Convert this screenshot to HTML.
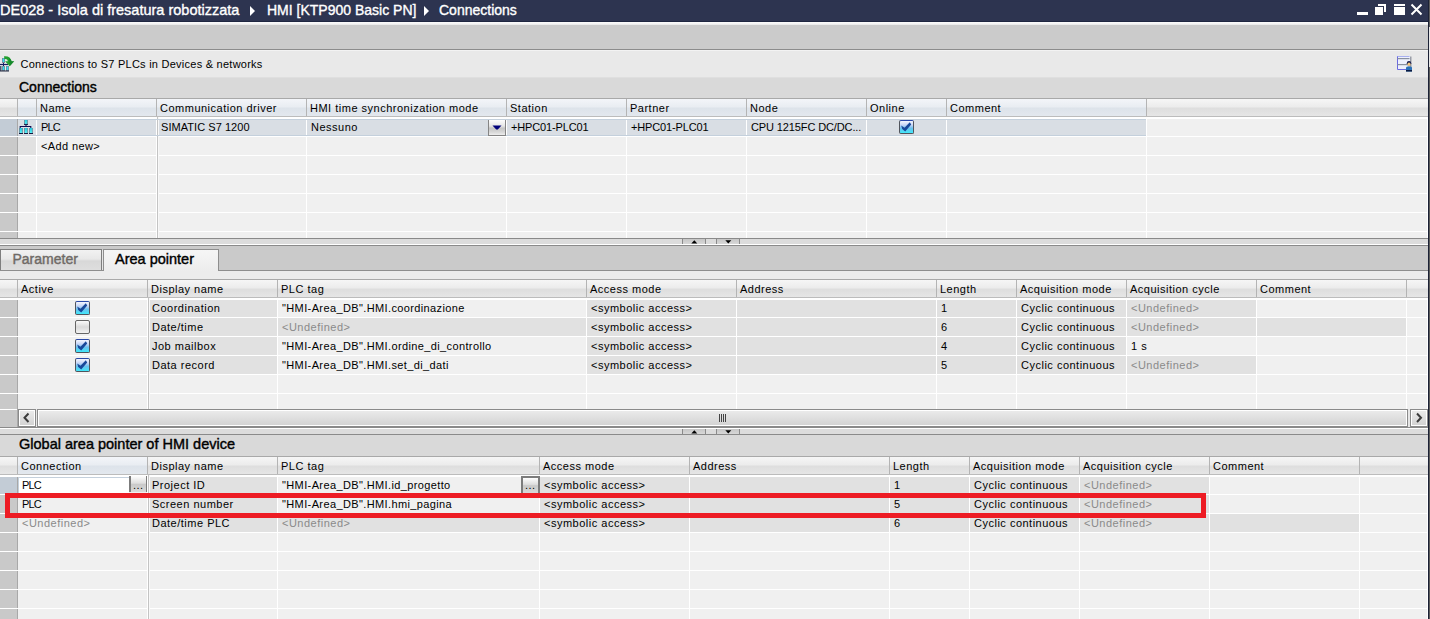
<!DOCTYPE html><html><head><meta charset="utf-8"><style>
html,body{margin:0;padding:0;}
body{width:1430px;height:619px;overflow:hidden;position:relative;background:#f0f0f0;font-family:"Liberation Sans",sans-serif;}
div{position:absolute;box-sizing:content-box;}
.t{white-space:nowrap;line-height:1;}
svg{position:absolute;}
</style></head><body>
<div style="left:0px;top:0px;width:1428px;height:21px;background:#2d3450"></div>
<div style="left:0px;top:21px;width:1428px;height:1px;background:#1e2640"></div>
<div class="t" style="left:0px;top:2.88px;font-size:14.5px;color:#ffffff;font-weight:normal;-webkit-text-stroke:0.35px #fff;">DE028 - Isola di fresatura robotizzata</div>
<svg style="left:250px;top:6px" width="6" height="10"><path d="M0 0 L5 5 L0 10 Z" fill="#fff"/></svg>
<div class="t" style="left:267px;top:3.33px;font-size:14px;color:#ffffff;font-weight:normal;-webkit-text-stroke:0.35px #fff;">HMI [KTP900 Basic PN]</div>
<svg style="left:424px;top:6px" width="6" height="10"><path d="M0 0 L5 5 L0 10 Z" fill="#fff"/></svg>
<div class="t" style="left:439px;top:3.33px;font-size:14px;color:#ffffff;font-weight:normal;-webkit-text-stroke:0.35px #fff;">Connections</div>
<div style="left:1357px;top:12px;width:11px;height:3px;background:#fff"></div>
<div style="left:1375px;top:7px;width:8px;height:8px;background:#fff"></div>
<div style="left:1378px;top:4px;width:8px;height:2px;background:#fff"></div>
<div style="left:1384px;top:4px;width:2px;height:8px;background:#fff"></div>
<div style="left:1394px;top:4px;width:11px;height:2px;background:#fff"></div>
<div style="left:1394px;top:7px;width:11px;height:8px;background:#fff"></div>
<svg style="left:1410px;top:3px" width="14" height="14"><path d="M1.5 1.5 L11.5 11.5 M11.5 1.5 L1.5 11.5" stroke="#fff" stroke-width="2"/></svg>
<div style="left:1428px;top:0px;width:1px;height:619px;background:#1c2236"></div>
<div style="left:1429px;top:0px;width:1px;height:619px;background:#5c5c5c"></div>
<div style="left:1429px;top:27px;width:1px;height:40px;background:#e8e8e8"></div>
<div style="left:0px;top:22px;width:1428px;height:3px;background:linear-gradient(#fbfbfb,#f2f2f2 66%,#e4e4e4)"></div>
<div style="left:0px;top:25px;width:1428px;height:24px;background:#cbcbcb"></div>
<div style="left:0px;top:49px;width:1428px;height:1px;background:#8c8c8c"></div>
<div style="left:0px;top:50px;width:1428px;height:27px;background:#e9e9e9"></div>
<div style="left:0px;top:50px;width:1428px;height:1px;background:#f3f3f3"></div>
<svg style="left:0px;top:50px" width="16" height="24" viewBox="0 0 16 24">
<rect x="2" y="8" width="3" height="5" fill="#7a8090"/><rect x="2.7" y="8.5" width="1.6" height="3.6" fill="#30e0f0"/>
<path d="M0 14.5 H8" stroke="#151a60" stroke-width="1.2"/><path d="M3.5 13 V16" stroke="#151a60" stroke-width="1"/>
<rect x="0" y="16" width="1.5" height="5" fill="#505870"/>
<rect x="2" y="16" width="3" height="5" fill="#7a8090"/><rect x="2.7" y="16.5" width="1.6" height="3.6" fill="#30e0f0"/>
<rect x="6" y="16" width="3" height="5" fill="#7a8090"/><rect x="6.7" y="16.5" width="1.6" height="3.6" fill="#30e0f0"/>
<path d="M0 21 H9" stroke="#202840" stroke-width="1"/>
<path d="M4 6.2 Q10.5 5.6 11.6 11.3 L14.2 11.3 L9.7 16.2 L5 11.3 L7.9 11.3 Q7.6 8.6 4.4 9 Z" fill="#22a030"/><path d="M9 8 Q11 9 11.6 11.3 L14.2 11.3 L9.7 16.2 Z" fill="#0f7a28" opacity="0.6"/>
</svg>
<div class="t" style="left:20.5px;top:59.04px;font-size:11px;color:#000;font-weight:normal;letter-spacing:0.25px;">Connections to S7 PLCs in Devices &amp; networks</div>
<svg style="left:1396px;top:55px" width="18" height="18" viewBox="0 0 18 18">
<rect x="13.5" y="1.5" width="2" height="13" fill="#9a9ea8"/>
<rect x="1" y="1" width="13" height="14" fill="#eef0fc"/>
<path d="M1.5 1 V14.5 H13" stroke="#6a6ae0" stroke-width="1" fill="none"/>
<path d="M1.5 1.5 H13.5" stroke="#a8b0f0" stroke-width="1"/>
<rect x="1.5" y="3" width="12" height="1.2" fill="#8890a0"/>
<rect x="1.5" y="9" width="12" height="1.2" fill="#8890a0"/>
<circle cx="13" cy="8.3" r="2.2" fill="#12184a"/>
<ellipse cx="13" cy="9.2" rx="1.6" ry="1.8" fill="#f4c880"/>
<path d="M10 16.5 V13 Q10 11.3 13 11.3 Q16 11.3 16 13 V16.5 Z" fill="#2a70b8"/>
<rect x="10" y="15" width="6" height="1.5" fill="#0a1a40"/>
</svg>
<div style="left:0px;top:77px;width:1428px;height:21px;background:#d9d9d9"></div>
<div style="left:0px;top:77px;width:1428px;height:1px;background:#dfdfdf"></div>
<div class="t" style="left:19px;top:79.83px;font-size:14px;color:#000;font-weight:normal;-webkit-text-stroke:0.4px #000;">Connections</div>
<div style="left:0px;top:98px;width:1428px;height:140px;background:#f0f0f0"></div>
<div style="left:0;top:98px;width:1428px;height:1px;background:#a9a9a9"></div>
<div style="left:0px;top:99px;width:17px;height:17px;background:linear-gradient(#f6f6f6 0%,#ececec 45%,#dedede 55%,#e6e6e6 100%)"></div>
<div style="left:18px;top:99px;width:18px;height:17px;background:linear-gradient(#f3f5f9 0%,#e9edf2 45%,#dde3ea 55%,#e3e8ee 100%)"></div>
<div style="left:37px;top:99px;width:119px;height:17px;background:linear-gradient(#f3f5f9 0%,#e9edf2 45%,#dde3ea 55%,#e3e8ee 100%)"></div>
<div style="left:157px;top:99px;width:149px;height:17px;background:linear-gradient(#f3f5f9 0%,#e9edf2 45%,#dde3ea 55%,#e3e8ee 100%)"></div>
<div style="left:307px;top:99px;width:199px;height:17px;background:linear-gradient(#f3f5f9 0%,#e9edf2 45%,#dde3ea 55%,#e3e8ee 100%)"></div>
<div style="left:507px;top:99px;width:119px;height:17px;background:linear-gradient(#f3f5f9 0%,#e9edf2 45%,#dde3ea 55%,#e3e8ee 100%)"></div>
<div style="left:627px;top:99px;width:119px;height:17px;background:linear-gradient(#f3f5f9 0%,#e9edf2 45%,#dde3ea 55%,#e3e8ee 100%)"></div>
<div style="left:747px;top:99px;width:119px;height:17px;background:linear-gradient(#f3f5f9 0%,#e9edf2 45%,#dde3ea 55%,#e3e8ee 100%)"></div>
<div style="left:867px;top:99px;width:79px;height:17px;background:linear-gradient(#f3f5f9 0%,#e9edf2 45%,#dde3ea 55%,#e3e8ee 100%)"></div>
<div style="left:947px;top:99px;width:199px;height:17px;background:linear-gradient(#f3f5f9 0%,#e9edf2 45%,#dde3ea 55%,#e3e8ee 100%)"></div>
<div style="left:1147px;top:99px;width:281px;height:17px;background:linear-gradient(#f6f6f6 0%,#ececec 45%,#dedede 55%,#e6e6e6 100%)"></div>
<div style="left:17px;top:99px;width:1px;height:17px;background:#b4b4b4"></div>
<div style="left:36px;top:99px;width:1px;height:17px;background:#b4b4b4"></div>
<div style="left:156px;top:99px;width:1px;height:17px;background:#b4b4b4"></div>
<div style="left:306px;top:99px;width:1px;height:17px;background:#b4b4b4"></div>
<div style="left:506px;top:99px;width:1px;height:17px;background:#b4b4b4"></div>
<div style="left:626px;top:99px;width:1px;height:17px;background:#b4b4b4"></div>
<div style="left:746px;top:99px;width:1px;height:17px;background:#b4b4b4"></div>
<div style="left:866px;top:99px;width:1px;height:17px;background:#b4b4b4"></div>
<div style="left:946px;top:99px;width:1px;height:17px;background:#b4b4b4"></div>
<div style="left:1146px;top:99px;width:1px;height:17px;background:#b4b4b4"></div>
<div style="left:0px;top:116px;width:1428px;height:1px;background:#bcbcbc"></div>
<div class="t" style="left:40px;top:103.04px;font-size:11px;color:#000;font-weight:normal;letter-spacing:0.5px;">Name</div>
<div class="t" style="left:160px;top:103.04px;font-size:11px;color:#000;font-weight:normal;letter-spacing:0.5px;">Communication driver</div>
<div class="t" style="left:310px;top:103.04px;font-size:11px;color:#000;font-weight:normal;letter-spacing:0.5px;">HMI time synchronization mode</div>
<div class="t" style="left:510px;top:103.04px;font-size:11px;color:#000;font-weight:normal;letter-spacing:0.5px;">Station</div>
<div class="t" style="left:630px;top:103.04px;font-size:11px;color:#000;font-weight:normal;letter-spacing:0.5px;">Partner</div>
<div class="t" style="left:750px;top:103.04px;font-size:11px;color:#000;font-weight:normal;letter-spacing:0.5px;">Node</div>
<div class="t" style="left:870px;top:103.04px;font-size:11px;color:#000;font-weight:normal;letter-spacing:0.5px;">Online</div>
<div class="t" style="left:950px;top:103.04px;font-size:11px;color:#000;font-weight:normal;letter-spacing:0.5px;">Comment</div>
<div style="left:0px;top:118px;width:17px;height:18px;background:#c3ccd6"></div>
<div style="left:18px;top:118px;width:18px;height:18px;background:#d9dee4"></div>
<div style="left:37px;top:118px;width:119px;height:18px;background:#d9dee4"></div>
<div style="left:157px;top:118px;width:149px;height:18px;background:#d9dee4"></div>
<div style="left:307px;top:118px;width:199px;height:18px;background:#d9dee4"></div>
<div style="left:507px;top:118px;width:119px;height:18px;background:#d9dee4"></div>
<div style="left:627px;top:118px;width:119px;height:18px;background:#d9dee4"></div>
<div style="left:747px;top:118px;width:119px;height:18px;background:#d9dee4"></div>
<div style="left:867px;top:118px;width:79px;height:18px;background:#d9dee4"></div>
<div style="left:947px;top:118px;width:199px;height:18px;background:#d9dee4"></div>
<div style="left:0px;top:137px;width:17px;height:18px;background:#c9c9c9"></div>
<div style="left:18px;top:137px;width:18px;height:18px;background:#e1e1e1"></div>
<div style="left:0px;top:156px;width:17px;height:18px;background:#c9c9c9"></div>
<div style="left:0px;top:175px;width:17px;height:18px;background:#c9c9c9"></div>
<div style="left:0px;top:194px;width:17px;height:18px;background:#c9c9c9"></div>
<div style="left:0px;top:213px;width:17px;height:18px;background:#c9c9c9"></div>
<div style="left:0px;top:232px;width:17px;height:6px;background:#c9c9c9"></div>
<div style="left:17px;top:117px;width:1px;height:121px;background:#a8a8a8"></div>
<div style="left:0px;top:118px;width:1428px;height:1px;background:#ffffff"></div>
<div style="left:0px;top:117px;width:1428px;height:1px;background:#ffffff"></div>
<div style="left:0px;top:136px;width:1428px;height:1px;background:#ffffff"></div>
<div style="left:0px;top:155px;width:1428px;height:1px;background:#ffffff"></div>
<div style="left:0px;top:174px;width:1428px;height:1px;background:#ffffff"></div>
<div style="left:0px;top:193px;width:1428px;height:1px;background:#ffffff"></div>
<div style="left:0px;top:212px;width:1428px;height:1px;background:#ffffff"></div>
<div style="left:0px;top:231px;width:1428px;height:1px;background:#ffffff"></div>
<div style="left:36px;top:117px;width:1px;height:121px;background:#ffffff"></div>
<div style="left:156px;top:117px;width:1px;height:121px;background:#ffffff"></div>
<div style="left:306px;top:117px;width:1px;height:121px;background:#ffffff"></div>
<div style="left:506px;top:117px;width:1px;height:121px;background:#ffffff"></div>
<div style="left:626px;top:117px;width:1px;height:121px;background:#ffffff"></div>
<div style="left:746px;top:117px;width:1px;height:121px;background:#ffffff"></div>
<div style="left:866px;top:117px;width:1px;height:121px;background:#ffffff"></div>
<div style="left:946px;top:117px;width:1px;height:121px;background:#ffffff"></div>
<div style="left:1146px;top:117px;width:1px;height:121px;background:#ffffff"></div>
<div style="left:1427px;top:117px;width:1px;height:121px;background:#ffffff"></div>
<div style="left:157px;top:117px;width:1px;height:121px;background:#c4c4c4"></div>
<div style="left:158px;top:117px;width:1px;height:121px;background:#f8f8f8"></div>
<div style="left:18px;top:119px;width:1128px;height:1px;background:#c4d0dc"></div>
<div style="left:18px;top:135px;width:1128px;height:1px;background:#c4d0dc"></div>
<div class="t" style="left:41px;top:122.04px;font-size:11px;color:#000;font-weight:normal;letter-spacing:-0.8px;">PLC</div>
<div class="t" style="left:161px;top:122.04px;font-size:11px;color:#000;font-weight:normal;letter-spacing:0.05px;">SIMATIC S7 1200</div>
<div class="t" style="left:311px;top:122.04px;font-size:11px;color:#000;font-weight:normal;letter-spacing:0.5px;">Nessuno</div>
<div class="t" style="left:511px;top:122.04px;font-size:11px;color:#000;font-weight:normal;letter-spacing:-0.15px;">+HPC01-PLC01</div>
<div class="t" style="left:631px;top:122.04px;font-size:11px;color:#000;font-weight:normal;letter-spacing:-0.15px;">+HPC01-PLC01</div>
<div class="t" style="left:751px;top:122.04px;font-size:11px;color:#000;font-weight:normal;letter-spacing:-0.12px;">CPU 1215FC DC/DC...</div>
<div class="t" style="left:41px;top:141.04px;font-size:11px;color:#000;font-weight:normal;letter-spacing:0.37px;">&lt;Add new&gt;</div>
<svg style="left:18px;top:119px" width="16" height="16" viewBox="0 0 16 16">
<defs><linearGradient id="cy" x1="0" y1="0" x2="0" y2="1"><stop offset="0" stop-color="#20c8e0"/><stop offset="1" stop-color="#60fcff"/></linearGradient></defs>
<rect x="6.2" y="1" width="3.5" height="4.6" fill="url(#cy)"/><path d="M6.5 1 V5.3 M9.4 1 V5.3" stroke="#707888" stroke-width="0.7"/><rect x="6" y="4.9" width="4" height="1" fill="#151a40"/>
<path d="M8 5.5 V7.6 M2.2 9.2 V7.5 H12.8 V9.2" stroke="#0c0c50" stroke-width="1.1" fill="none"/>
<rect x="1.2" y="9" width="3.5" height="5.6" fill="url(#cy)"/><path d="M1.5 9 V14.3 M4.4 9 V14.3" stroke="#707888" stroke-width="0.7"/><rect x="1" y="14" width="4" height="1" fill="#151a40"/>
<rect x="6.2" y="9" width="3.5" height="5.6" fill="url(#cy)"/><path d="M6.5 9 V14.3 M9.4 9 V14.3" stroke="#707888" stroke-width="0.7"/><rect x="6" y="14" width="4" height="1" fill="#151a40"/>
<rect x="11.2" y="9" width="3.5" height="5.6" fill="url(#cy)"/><path d="M11.5 9 V14.3 M14.4 9 V14.3" stroke="#707888" stroke-width="0.7"/><rect x="11" y="14" width="4" height="1" fill="#151a40"/>
</svg>
<div style="left:488px;top:120px;width:16px;height:15px;border-left:1px solid #858585;border-right:1px solid #858585;border-bottom:1px solid #858585;background:linear-gradient(#fdfdfd 0%,#e6e6e6 40%,#c4c4c4 55%,#dcdcdc 85%,#eeeeee 100%)"></div>
<svg style="left:492px;top:125px" width="10" height="6"><path d="M0.5 0.6 H9.5 L5.8 4.6 H4.2 Z" fill="#00007a"/></svg>
<div style="left:899px;top:120px;width:13px;height:12px;border:1px solid #50545c;border-top-color:#2a48a8;border-radius:2px;background:linear-gradient(#f4f6fe 0%,#c4d4f6 35%,#6cc0ee 60%,#40e8fa 100%)"></div>
<svg style="position:absolute;left:899px;top:120px" width="15" height="14" viewBox="0 0 15 14"><path d="M2.2 5.4 L5.5 7.8 L10.8 2.2 L12.2 4.6 L6.2 11.4 L3.2 9 Z" fill="#18489a"/></svg>
<div style="left:0px;top:238px;width:1428px;height:1px;background:#8a8a8a"></div>
<div style="left:0px;top:239px;width:1428px;height:5px;background:#dcdcdc"></div>
<div style="left:0px;top:244px;width:1428px;height:1px;background:#ffffff"></div>
<div style="left:0px;top:245px;width:1428px;height:1px;background:#8a8a8a"></div>
<div style="left:682px;top:239px;width:22px;height:5px;border-left:1px solid #8a8a8a;border-right:1px solid #8a8a8a;background:linear-gradient(#c6c6c6,#d8d8d8)"></div>
<svg style="left:691px;top:240px" width="7" height="4"><path d="M0.3 3.5 L3.3 0.3 L6.3 3.5 Z" fill="#000"/></svg>
<div style="left:716px;top:239px;width:22px;height:5px;border-left:1px solid #8a8a8a;border-right:1px solid #8a8a8a;background:linear-gradient(#c6c6c6,#d8d8d8)"></div>
<svg style="left:725px;top:240px" width="7" height="4"><path d="M0.3 0.3 L6.3 0.3 L3.3 3.5 Z" fill="#000"/></svg>
<div style="left:0px;top:246px;width:1428px;height:24px;background:#cacaca"></div>
<div style="left:0px;top:270px;width:1428px;height:1px;background:#8e8e8e"></div>
<div style="left:0px;top:249px;width:101px;height:20px;border-top:1px solid #7e7e7e;border-right:1px solid #7e7e7e;box-shadow:inset 1px 0 0 #7e7e7e;background:linear-gradient(#f2f2f2 0%,#e8e8e8 45%,#d8d8d8 55%,#dedede 100%)"></div>
<div style="left:102px;top:250px;width:1px;height:20px;background:#e6e6e6"></div>
<div class="t" style="left:12.5px;top:252.33px;font-size:14px;color:#6f6a66;font-weight:normal;-webkit-text-stroke:0.4px #6f6a66;">Parameter</div>
<div style="left:103px;top:249px;width:114px;height:22px;border-top:1px solid #8e8e8e;border-left:1px solid #8e8e8e;border-right:1px solid #8e8e8e;background:linear-gradient(#f6f6f6,#ececec)"></div>
<div class="t" style="left:115px;top:252.38px;font-size:14.5px;color:#000;font-weight:normal;-webkit-text-stroke:0.4px #000;">Area pointer</div>
<div style="left:0px;top:271px;width:1428px;height:8px;background:#ececec"></div>
<div style="left:0px;top:279px;width:1428px;height:130px;background:#f0f0f0"></div>
<div style="left:0;top:279px;width:1428px;height:1px;background:#a9a9a9"></div>
<div style="left:0px;top:280px;width:17px;height:17px;background:linear-gradient(#f6f6f6 0%,#ececec 45%,#dedede 55%,#e6e6e6 100%)"></div>
<div style="left:18px;top:280px;width:129px;height:17px;background:linear-gradient(#f6f6f6 0%,#ececec 45%,#dedede 55%,#e6e6e6 100%)"></div>
<div style="left:148px;top:280px;width:129px;height:17px;background:linear-gradient(#f6f6f6 0%,#ececec 45%,#dedede 55%,#e6e6e6 100%)"></div>
<div style="left:278px;top:280px;width:308px;height:17px;background:linear-gradient(#f6f6f6 0%,#ececec 45%,#dedede 55%,#e6e6e6 100%)"></div>
<div style="left:587px;top:280px;width:149px;height:17px;background:linear-gradient(#f6f6f6 0%,#ececec 45%,#dedede 55%,#e6e6e6 100%)"></div>
<div style="left:737px;top:280px;width:199px;height:17px;background:linear-gradient(#f6f6f6 0%,#ececec 45%,#dedede 55%,#e6e6e6 100%)"></div>
<div style="left:937px;top:280px;width:79px;height:17px;background:linear-gradient(#f6f6f6 0%,#ececec 45%,#dedede 55%,#e6e6e6 100%)"></div>
<div style="left:1017px;top:280px;width:109px;height:17px;background:linear-gradient(#f6f6f6 0%,#ececec 45%,#dedede 55%,#e6e6e6 100%)"></div>
<div style="left:1127px;top:280px;width:129px;height:17px;background:linear-gradient(#f6f6f6 0%,#ececec 45%,#dedede 55%,#e6e6e6 100%)"></div>
<div style="left:1257px;top:280px;width:149px;height:17px;background:linear-gradient(#f6f6f6 0%,#ececec 45%,#dedede 55%,#e6e6e6 100%)"></div>
<div style="left:1407px;top:280px;width:21px;height:17px;background:linear-gradient(#f6f6f6 0%,#ececec 45%,#dedede 55%,#e6e6e6 100%)"></div>
<div style="left:17px;top:280px;width:1px;height:17px;background:#b4b4b4"></div>
<div style="left:147px;top:280px;width:1px;height:17px;background:#b4b4b4"></div>
<div style="left:277px;top:280px;width:1px;height:17px;background:#b4b4b4"></div>
<div style="left:586px;top:280px;width:1px;height:17px;background:#b4b4b4"></div>
<div style="left:736px;top:280px;width:1px;height:17px;background:#b4b4b4"></div>
<div style="left:936px;top:280px;width:1px;height:17px;background:#b4b4b4"></div>
<div style="left:1016px;top:280px;width:1px;height:17px;background:#b4b4b4"></div>
<div style="left:1126px;top:280px;width:1px;height:17px;background:#b4b4b4"></div>
<div style="left:1256px;top:280px;width:1px;height:17px;background:#b4b4b4"></div>
<div style="left:1406px;top:280px;width:1px;height:17px;background:#b4b4b4"></div>
<div style="left:0px;top:297px;width:1428px;height:1px;background:#bcbcbc"></div>
<div class="t" style="left:21px;top:284.04px;font-size:11px;color:#000;font-weight:normal;letter-spacing:0.5px;">Active</div>
<div class="t" style="left:151px;top:284.04px;font-size:11px;color:#000;font-weight:normal;letter-spacing:0.5px;">Display name</div>
<div class="t" style="left:281px;top:284.04px;font-size:11px;color:#000;font-weight:normal;letter-spacing:0.5px;">PLC tag</div>
<div class="t" style="left:590px;top:284.04px;font-size:11px;color:#000;font-weight:normal;letter-spacing:0.5px;">Access mode</div>
<div class="t" style="left:740px;top:284.04px;font-size:11px;color:#000;font-weight:normal;letter-spacing:0.5px;">Address</div>
<div class="t" style="left:940px;top:284.04px;font-size:11px;color:#000;font-weight:normal;letter-spacing:0.5px;">Length</div>
<div class="t" style="left:1020px;top:284.04px;font-size:11px;color:#000;font-weight:normal;letter-spacing:0.5px;">Acquisition mode</div>
<div class="t" style="left:1130px;top:284.04px;font-size:11px;color:#000;font-weight:normal;letter-spacing:0.5px;">Acquisition cycle</div>
<div class="t" style="left:1260px;top:284.04px;font-size:11px;color:#000;font-weight:normal;letter-spacing:0.5px;">Comment</div>
<div style="left:0px;top:299px;width:17px;height:18px;background:#c9c9c9"></div>
<div style="left:148px;top:299px;width:129px;height:18px;background:#e1e1e1"></div>
<div style="left:587px;top:299px;width:149px;height:18px;background:#e1e1e1"></div>
<div style="left:737px;top:299px;width:199px;height:18px;background:#e1e1e1"></div>
<div style="left:937px;top:299px;width:79px;height:18px;background:#e1e1e1"></div>
<div style="left:1017px;top:299px;width:109px;height:18px;background:#e1e1e1"></div>
<div style="left:1127px;top:299px;width:129px;height:18px;background:#e1e1e1"></div>
<div style="left:0px;top:318px;width:17px;height:18px;background:#c9c9c9"></div>
<div style="left:148px;top:318px;width:129px;height:18px;background:#e1e1e1"></div>
<div style="left:278px;top:318px;width:308px;height:18px;background:#e1e1e1"></div>
<div style="left:587px;top:318px;width:149px;height:18px;background:#e1e1e1"></div>
<div style="left:737px;top:318px;width:199px;height:18px;background:#e1e1e1"></div>
<div style="left:937px;top:318px;width:79px;height:18px;background:#e1e1e1"></div>
<div style="left:1017px;top:318px;width:109px;height:18px;background:#e1e1e1"></div>
<div style="left:1127px;top:318px;width:129px;height:18px;background:#e1e1e1"></div>
<div style="left:1257px;top:318px;width:149px;height:18px;background:#e1e1e1"></div>
<div style="left:0px;top:337px;width:17px;height:18px;background:#c9c9c9"></div>
<div style="left:148px;top:337px;width:129px;height:18px;background:#e1e1e1"></div>
<div style="left:587px;top:337px;width:149px;height:18px;background:#e1e1e1"></div>
<div style="left:737px;top:337px;width:199px;height:18px;background:#e1e1e1"></div>
<div style="left:937px;top:337px;width:79px;height:18px;background:#e1e1e1"></div>
<div style="left:1017px;top:337px;width:109px;height:18px;background:#e1e1e1"></div>
<div style="left:0px;top:356px;width:17px;height:18px;background:#c9c9c9"></div>
<div style="left:148px;top:356px;width:129px;height:18px;background:#e1e1e1"></div>
<div style="left:587px;top:356px;width:149px;height:18px;background:#e1e1e1"></div>
<div style="left:737px;top:356px;width:199px;height:18px;background:#e1e1e1"></div>
<div style="left:937px;top:356px;width:79px;height:18px;background:#e1e1e1"></div>
<div style="left:1017px;top:356px;width:109px;height:18px;background:#e1e1e1"></div>
<div style="left:1127px;top:356px;width:129px;height:18px;background:#e1e1e1"></div>
<div style="left:0px;top:375px;width:17px;height:18px;background:#c9c9c9"></div>
<div style="left:0px;top:394px;width:17px;height:15px;background:#c9c9c9"></div>
<div style="left:17px;top:298px;width:1px;height:111px;background:#a8a8a8"></div>
<div style="left:0px;top:299px;width:1428px;height:1px;background:#ffffff"></div>
<div style="left:0px;top:298px;width:1428px;height:1px;background:#ffffff"></div>
<div style="left:0px;top:317px;width:1428px;height:1px;background:#ffffff"></div>
<div style="left:0px;top:336px;width:1428px;height:1px;background:#ffffff"></div>
<div style="left:0px;top:355px;width:1428px;height:1px;background:#ffffff"></div>
<div style="left:0px;top:374px;width:1428px;height:1px;background:#ffffff"></div>
<div style="left:0px;top:393px;width:1428px;height:1px;background:#ffffff"></div>
<div style="left:147px;top:298px;width:1px;height:111px;background:#ffffff"></div>
<div style="left:277px;top:298px;width:1px;height:111px;background:#ffffff"></div>
<div style="left:586px;top:298px;width:1px;height:111px;background:#ffffff"></div>
<div style="left:736px;top:298px;width:1px;height:111px;background:#ffffff"></div>
<div style="left:936px;top:298px;width:1px;height:111px;background:#ffffff"></div>
<div style="left:1016px;top:298px;width:1px;height:111px;background:#ffffff"></div>
<div style="left:1126px;top:298px;width:1px;height:111px;background:#ffffff"></div>
<div style="left:1256px;top:298px;width:1px;height:111px;background:#ffffff"></div>
<div style="left:1406px;top:298px;width:1px;height:111px;background:#ffffff"></div>
<div style="left:1427px;top:298px;width:1px;height:111px;background:#ffffff"></div>
<div style="left:148px;top:298px;width:1px;height:111px;background:#c4c4c4"></div>
<div style="left:149px;top:298px;width:1px;height:111px;background:#f8f8f8"></div>
<div class="t" style="left:152px;top:303.04px;font-size:11px;color:#000;font-weight:normal;letter-spacing:0.5px;">Coordination</div>
<div class="t" style="left:282px;top:303.04px;font-size:11px;color:#000;font-weight:normal;letter-spacing:0.38px;">"HMI-Area_DB".HMI.coordinazione</div>
<div class="t" style="left:591px;top:303.04px;font-size:11px;color:#000;font-weight:normal;letter-spacing:0.5px;">&lt;symbolic access&gt;</div>
<div class="t" style="left:941px;top:303.04px;font-size:11px;color:#000;font-weight:normal;letter-spacing:0.5px;">1</div>
<div class="t" style="left:1021px;top:303.04px;font-size:11px;color:#000;font-weight:normal;letter-spacing:0.5px;">Cyclic continuous</div>
<div class="t" style="left:1131px;top:303.04px;font-size:11px;color:#8a8a8a;font-weight:normal;letter-spacing:0.5px;">&lt;Undefined&gt;</div>
<div class="t" style="left:152px;top:322.04px;font-size:11px;color:#000;font-weight:normal;letter-spacing:0.5px;">Date/time</div>
<div class="t" style="left:282px;top:322.04px;font-size:11px;color:#8a8a8a;font-weight:normal;letter-spacing:0.5px;">&lt;Undefined&gt;</div>
<div class="t" style="left:591px;top:322.04px;font-size:11px;color:#000;font-weight:normal;letter-spacing:0.5px;">&lt;symbolic access&gt;</div>
<div class="t" style="left:941px;top:322.04px;font-size:11px;color:#000;font-weight:normal;letter-spacing:0.5px;">6</div>
<div class="t" style="left:1021px;top:322.04px;font-size:11px;color:#000;font-weight:normal;letter-spacing:0.5px;">Cyclic continuous</div>
<div class="t" style="left:1131px;top:322.04px;font-size:11px;color:#8a8a8a;font-weight:normal;letter-spacing:0.5px;">&lt;Undefined&gt;</div>
<div class="t" style="left:152px;top:341.04px;font-size:11px;color:#000;font-weight:normal;letter-spacing:0.5px;">Job mailbox</div>
<div class="t" style="left:282px;top:341.04px;font-size:11px;color:#000;font-weight:normal;letter-spacing:0.38px;">"HMI-Area_DB".HMI.ordine_di_controllo</div>
<div class="t" style="left:591px;top:341.04px;font-size:11px;color:#000;font-weight:normal;letter-spacing:0.5px;">&lt;symbolic access&gt;</div>
<div class="t" style="left:941px;top:341.04px;font-size:11px;color:#000;font-weight:normal;letter-spacing:0.5px;">4</div>
<div class="t" style="left:1021px;top:341.04px;font-size:11px;color:#000;font-weight:normal;letter-spacing:0.5px;">Cyclic continuous</div>
<div class="t" style="left:1131px;top:341.04px;font-size:11px;color:#000;font-weight:normal;letter-spacing:0.5px;">1 s</div>
<div class="t" style="left:152px;top:360.04px;font-size:11px;color:#000;font-weight:normal;letter-spacing:0.5px;">Data record</div>
<div class="t" style="left:282px;top:360.04px;font-size:11px;color:#000;font-weight:normal;letter-spacing:0.38px;">"HMI-Area_DB".HMI.set_di_dati</div>
<div class="t" style="left:591px;top:360.04px;font-size:11px;color:#000;font-weight:normal;letter-spacing:0.5px;">&lt;symbolic access&gt;</div>
<div class="t" style="left:941px;top:360.04px;font-size:11px;color:#000;font-weight:normal;letter-spacing:0.5px;">5</div>
<div class="t" style="left:1021px;top:360.04px;font-size:11px;color:#000;font-weight:normal;letter-spacing:0.5px;">Cyclic continuous</div>
<div class="t" style="left:1131px;top:360.04px;font-size:11px;color:#8a8a8a;font-weight:normal;letter-spacing:0.5px;">&lt;Undefined&gt;</div>
<div style="left:75px;top:301px;width:13px;height:12px;border:1px solid #50545c;border-top-color:#2a48a8;border-radius:2px;background:linear-gradient(#f4f6fe 0%,#c4d4f6 35%,#6cc0ee 60%,#40e8fa 100%)"></div>
<svg style="position:absolute;left:75px;top:301px" width="15" height="14" viewBox="0 0 15 14"><path d="M2.2 5.4 L5.5 7.8 L10.8 2.2 L12.2 4.6 L6.2 11.4 L3.2 9 Z" fill="#18489a"/></svg>
<div style="left:75px;top:320px;width:13px;height:12px;border:1px solid #666;border-radius:2px;background:linear-gradient(#fafafa 0%,#dadada 50%,#f2f2f2 100%)"></div>
<div style="left:75px;top:339px;width:13px;height:12px;border:1px solid #50545c;border-top-color:#2a48a8;border-radius:2px;background:linear-gradient(#f4f6fe 0%,#c4d4f6 35%,#6cc0ee 60%,#40e8fa 100%)"></div>
<svg style="position:absolute;left:75px;top:339px" width="15" height="14" viewBox="0 0 15 14"><path d="M2.2 5.4 L5.5 7.8 L10.8 2.2 L12.2 4.6 L6.2 11.4 L3.2 9 Z" fill="#18489a"/></svg>
<div style="left:75px;top:358px;width:13px;height:12px;border:1px solid #50545c;border-top-color:#2a48a8;border-radius:2px;background:linear-gradient(#f4f6fe 0%,#c4d4f6 35%,#6cc0ee 60%,#40e8fa 100%)"></div>
<svg style="position:absolute;left:75px;top:358px" width="15" height="14" viewBox="0 0 15 14"><path d="M2.2 5.4 L5.5 7.8 L10.8 2.2 L12.2 4.6 L6.2 11.4 L3.2 9 Z" fill="#18489a"/></svg>
<div style="left:0px;top:409px;width:17px;height:18px;background:#c9c9c9"></div>
<div style="left:0px;top:409px;width:17px;height:1px;background:#ffffff"></div>
<div style="left:17px;top:409px;width:1px;height:18px;background:#a8a8a8"></div>
<div style="left:18px;top:409px;width:1410px;height:18px;background:#e6e6e6"></div>
<div style="left:18px;top:409px;width:16px;height:16px;border:1px solid #8a8a8a;box-shadow:inset 0 0 0 1px #fff;background:linear-gradient(#ececec,#d2d2d2)"></div>
<svg style="left:18px;top:409px" width="18" height="18"><path d="M10.5 4.5 L6.5 8.8 L10.5 13" stroke="#3c3c3c" stroke-width="2" fill="none"/></svg>
<div style="left:37px;top:409px;width:1369px;height:16px;border:1px solid #8a8a8a;box-shadow:inset 0 0 0 1px #fff;background:linear-gradient(#ececec,#d2d2d2)"></div>
<div style="left:719px;top:414px;width:1px;height:8px;background:#444"></div>
<div style="left:721px;top:414px;width:1px;height:8px;background:#444"></div>
<div style="left:723px;top:414px;width:1px;height:8px;background:#444"></div>
<div style="left:725px;top:414px;width:1px;height:8px;background:#444"></div>
<div style="left:1410px;top:409px;width:16px;height:16px;border:1px solid #8a8a8a;box-shadow:inset 0 0 0 1px #fff;background:linear-gradient(#ececec,#d2d2d2)"></div>
<svg style="left:1410px;top:409px" width="18" height="18"><path d="M7 4.5 L11 8.8 L7 13" stroke="#3c3c3c" stroke-width="2" fill="none"/></svg>
<div style="left:0px;top:427px;width:1428px;height:1px;background:#8a8a8a"></div>
<div style="left:0px;top:428px;width:1428px;height:1px;background:#ffffff"></div>
<div style="left:0px;top:429px;width:1428px;height:5px;background:#dcdcdc"></div>
<div style="left:0px;top:434px;width:1428px;height:1px;background:#8a8a8a"></div>
<div style="left:682px;top:429px;width:22px;height:5px;border-left:1px solid #8a8a8a;border-right:1px solid #8a8a8a;background:linear-gradient(#c6c6c6,#d8d8d8)"></div>
<svg style="left:691px;top:429.5px" width="7" height="4"><path d="M0.3 3.5 L3.3 0.3 L6.3 3.5 Z" fill="#000"/></svg>
<div style="left:716px;top:429px;width:22px;height:5px;border-left:1px solid #8a8a8a;border-right:1px solid #8a8a8a;background:linear-gradient(#c6c6c6,#d8d8d8)"></div>
<svg style="left:725px;top:429.5px" width="7" height="4"><path d="M0.3 0.3 L6.3 0.3 L3.3 3.5 Z" fill="#000"/></svg>
<div style="left:0px;top:435px;width:1428px;height:21px;background:#d9d9d9"></div>
<div class="t" style="left:19px;top:437.38px;font-size:14.5px;color:#000;font-weight:normal;-webkit-text-stroke:0.4px #000;">Global area pointer of HMI device</div>
<div style="left:0px;top:456px;width:1428px;height:163px;background:#f0f0f0"></div>
<div style="left:0;top:456px;width:1428px;height:1px;background:#a9a9a9"></div>
<div style="left:0px;top:457px;width:17px;height:17px;background:linear-gradient(#f6f6f6 0%,#ececec 45%,#dedede 55%,#e6e6e6 100%)"></div>
<div style="left:18px;top:457px;width:129px;height:17px;background:linear-gradient(#f3f5f9 0%,#e9edf2 45%,#dde3ea 55%,#e3e8ee 100%)"></div>
<div style="left:148px;top:457px;width:129px;height:17px;background:linear-gradient(#f6f6f6 0%,#ececec 45%,#dedede 55%,#e6e6e6 100%)"></div>
<div style="left:278px;top:457px;width:261px;height:17px;background:linear-gradient(#f6f6f6 0%,#ececec 45%,#dedede 55%,#e6e6e6 100%)"></div>
<div style="left:540px;top:457px;width:149px;height:17px;background:linear-gradient(#f6f6f6 0%,#ececec 45%,#dedede 55%,#e6e6e6 100%)"></div>
<div style="left:690px;top:457px;width:199px;height:17px;background:linear-gradient(#f6f6f6 0%,#ececec 45%,#dedede 55%,#e6e6e6 100%)"></div>
<div style="left:890px;top:457px;width:79px;height:17px;background:linear-gradient(#f6f6f6 0%,#ececec 45%,#dedede 55%,#e6e6e6 100%)"></div>
<div style="left:970px;top:457px;width:109px;height:17px;background:linear-gradient(#f6f6f6 0%,#ececec 45%,#dedede 55%,#e6e6e6 100%)"></div>
<div style="left:1080px;top:457px;width:129px;height:17px;background:linear-gradient(#f6f6f6 0%,#ececec 45%,#dedede 55%,#e6e6e6 100%)"></div>
<div style="left:1210px;top:457px;width:149px;height:17px;background:linear-gradient(#f6f6f6 0%,#ececec 45%,#dedede 55%,#e6e6e6 100%)"></div>
<div style="left:1360px;top:457px;width:68px;height:17px;background:linear-gradient(#f6f6f6 0%,#ececec 45%,#dedede 55%,#e6e6e6 100%)"></div>
<div style="left:17px;top:457px;width:1px;height:17px;background:#b4b4b4"></div>
<div style="left:147px;top:457px;width:1px;height:17px;background:#b4b4b4"></div>
<div style="left:277px;top:457px;width:1px;height:17px;background:#b4b4b4"></div>
<div style="left:539px;top:457px;width:1px;height:17px;background:#b4b4b4"></div>
<div style="left:689px;top:457px;width:1px;height:17px;background:#b4b4b4"></div>
<div style="left:889px;top:457px;width:1px;height:17px;background:#b4b4b4"></div>
<div style="left:969px;top:457px;width:1px;height:17px;background:#b4b4b4"></div>
<div style="left:1079px;top:457px;width:1px;height:17px;background:#b4b4b4"></div>
<div style="left:1209px;top:457px;width:1px;height:17px;background:#b4b4b4"></div>
<div style="left:1359px;top:457px;width:1px;height:17px;background:#b4b4b4"></div>
<div style="left:0px;top:474px;width:1428px;height:1px;background:#bcbcbc"></div>
<div class="t" style="left:21px;top:461.04px;font-size:11px;color:#000;font-weight:normal;letter-spacing:0.5px;">Connection</div>
<div class="t" style="left:151px;top:461.04px;font-size:11px;color:#000;font-weight:normal;letter-spacing:0.5px;">Display name</div>
<div class="t" style="left:281px;top:461.04px;font-size:11px;color:#000;font-weight:normal;letter-spacing:0.5px;">PLC tag</div>
<div class="t" style="left:543px;top:461.04px;font-size:11px;color:#000;font-weight:normal;letter-spacing:0.5px;">Access mode</div>
<div class="t" style="left:693px;top:461.04px;font-size:11px;color:#000;font-weight:normal;letter-spacing:0.5px;">Address</div>
<div class="t" style="left:893px;top:461.04px;font-size:11px;color:#000;font-weight:normal;letter-spacing:0.5px;">Length</div>
<div class="t" style="left:973px;top:461.04px;font-size:11px;color:#000;font-weight:normal;letter-spacing:0.5px;">Acquisition mode</div>
<div class="t" style="left:1083px;top:461.04px;font-size:11px;color:#000;font-weight:normal;letter-spacing:0.5px;">Acquisition cycle</div>
<div class="t" style="left:1213px;top:461.04px;font-size:11px;color:#000;font-weight:normal;letter-spacing:0.5px;">Comment</div>
<div style="left:0px;top:476px;width:17px;height:18px;background:#c3ccd6"></div>
<div style="left:148px;top:476px;width:129px;height:18px;background:#e1e1e1"></div>
<div style="left:540px;top:476px;width:149px;height:18px;background:#e1e1e1"></div>
<div style="left:690px;top:476px;width:199px;height:18px;background:#e1e1e1"></div>
<div style="left:890px;top:476px;width:79px;height:18px;background:#e1e1e1"></div>
<div style="left:970px;top:476px;width:109px;height:18px;background:#e1e1e1"></div>
<div style="left:1080px;top:476px;width:129px;height:18px;background:#e1e1e1"></div>
<div style="left:0px;top:495px;width:17px;height:18px;background:#c9c9c9"></div>
<div style="left:148px;top:495px;width:129px;height:18px;background:#e1e1e1"></div>
<div style="left:540px;top:495px;width:149px;height:18px;background:#e1e1e1"></div>
<div style="left:690px;top:495px;width:199px;height:18px;background:#e1e1e1"></div>
<div style="left:890px;top:495px;width:79px;height:18px;background:#e1e1e1"></div>
<div style="left:970px;top:495px;width:109px;height:18px;background:#e1e1e1"></div>
<div style="left:1080px;top:495px;width:129px;height:18px;background:#e1e1e1"></div>
<div style="left:0px;top:514px;width:17px;height:18px;background:#c9c9c9"></div>
<div style="left:148px;top:514px;width:129px;height:18px;background:#e1e1e1"></div>
<div style="left:278px;top:514px;width:261px;height:18px;background:#e1e1e1"></div>
<div style="left:540px;top:514px;width:149px;height:18px;background:#e1e1e1"></div>
<div style="left:690px;top:514px;width:199px;height:18px;background:#e1e1e1"></div>
<div style="left:890px;top:514px;width:79px;height:18px;background:#e1e1e1"></div>
<div style="left:970px;top:514px;width:109px;height:18px;background:#e1e1e1"></div>
<div style="left:1080px;top:514px;width:129px;height:18px;background:#e1e1e1"></div>
<div style="left:1210px;top:514px;width:149px;height:18px;background:#e1e1e1"></div>
<div style="left:0px;top:533px;width:17px;height:18px;background:#c9c9c9"></div>
<div style="left:0px;top:552px;width:17px;height:18px;background:#c9c9c9"></div>
<div style="left:0px;top:571px;width:17px;height:18px;background:#c9c9c9"></div>
<div style="left:0px;top:590px;width:17px;height:18px;background:#c9c9c9"></div>
<div style="left:0px;top:609px;width:17px;height:10px;background:#c9c9c9"></div>
<div style="left:17px;top:475px;width:1px;height:144px;background:#a8a8a8"></div>
<div style="left:0px;top:476px;width:1428px;height:1px;background:#ffffff"></div>
<div style="left:0px;top:475px;width:1428px;height:1px;background:#ffffff"></div>
<div style="left:0px;top:494px;width:1428px;height:1px;background:#ffffff"></div>
<div style="left:0px;top:513px;width:1428px;height:1px;background:#ffffff"></div>
<div style="left:0px;top:532px;width:1428px;height:1px;background:#ffffff"></div>
<div style="left:0px;top:551px;width:1428px;height:1px;background:#ffffff"></div>
<div style="left:0px;top:570px;width:1428px;height:1px;background:#ffffff"></div>
<div style="left:0px;top:589px;width:1428px;height:1px;background:#ffffff"></div>
<div style="left:0px;top:608px;width:1428px;height:1px;background:#ffffff"></div>
<div style="left:147px;top:475px;width:1px;height:144px;background:#ffffff"></div>
<div style="left:277px;top:475px;width:1px;height:144px;background:#ffffff"></div>
<div style="left:539px;top:475px;width:1px;height:144px;background:#ffffff"></div>
<div style="left:689px;top:475px;width:1px;height:144px;background:#ffffff"></div>
<div style="left:889px;top:475px;width:1px;height:144px;background:#ffffff"></div>
<div style="left:969px;top:475px;width:1px;height:144px;background:#ffffff"></div>
<div style="left:1079px;top:475px;width:1px;height:144px;background:#ffffff"></div>
<div style="left:1209px;top:475px;width:1px;height:144px;background:#ffffff"></div>
<div style="left:1359px;top:475px;width:1px;height:144px;background:#ffffff"></div>
<div style="left:1427px;top:475px;width:1px;height:144px;background:#ffffff"></div>
<div style="left:148px;top:475px;width:1px;height:144px;background:#c4c4c4"></div>
<div style="left:149px;top:475px;width:1px;height:144px;background:#f8f8f8"></div>
<div style="left:18px;top:477px;width:111px;height:15px;background:#ffffff;border-top:1px solid #c4d0dc;box-shadow:inset 1px 0 0 #c4d0dc"></div>
<div style="left:129px;top:476px;width:15px;height:16px;border-left:2px solid #7c7c7c;border-right:1px solid #7c7c7c;background:linear-gradient(#fefefe 0%,#dedede 45%,#c9c9c9 52%,#dadada 100%)"></div>
<div class="t" style="left:133px;top:480.04px;font-size:11px;color:#000;font-weight:normal;letter-spacing:0.5px;">...</div>
<div style="left:521px;top:476px;width:15px;height:16px;border-left:2px solid #7c7c7c;border-right:2px solid #7c7c7c;border-top:2px solid #7c7c7c;background:linear-gradient(#fefefe 0%,#dedede 40%,#c9c9c9 48%,#dadada 100%)"></div>
<div class="t" style="left:525px;top:480.04px;font-size:11px;color:#000;font-weight:normal;letter-spacing:0.5px;">...</div>
<div class="t" style="left:22px;top:480.04px;font-size:11px;color:#000;font-weight:normal;letter-spacing:-0.8px;">PLC</div>
<div class="t" style="left:152px;top:480.04px;font-size:11px;color:#000;font-weight:normal;letter-spacing:0.5px;">Project ID</div>
<div class="t" style="left:282px;top:480.04px;font-size:11px;color:#000;font-weight:normal;letter-spacing:0.38px;">"HMI-Area_DB".HMI.id_progetto</div>
<div class="t" style="left:544px;top:480.04px;font-size:11px;color:#000;font-weight:normal;letter-spacing:0.5px;">&lt;symbolic access&gt;</div>
<div class="t" style="left:894px;top:480.04px;font-size:11px;color:#000;font-weight:normal;letter-spacing:0.5px;">1</div>
<div class="t" style="left:974px;top:480.04px;font-size:11px;color:#000;font-weight:normal;letter-spacing:0.5px;">Cyclic continuous</div>
<div class="t" style="left:1084px;top:480.04px;font-size:11px;color:#8a8a8a;font-weight:normal;letter-spacing:0.5px;">&lt;Undefined&gt;</div>
<div class="t" style="left:22px;top:499.04px;font-size:11px;color:#000;font-weight:normal;letter-spacing:-0.8px;">PLC</div>
<div class="t" style="left:152px;top:499.04px;font-size:11px;color:#000;font-weight:normal;letter-spacing:0.5px;">Screen number</div>
<div class="t" style="left:282px;top:499.04px;font-size:11px;color:#000;font-weight:normal;letter-spacing:0.38px;">"HMI-Area_DB".HMI.hmi_pagina</div>
<div class="t" style="left:544px;top:499.04px;font-size:11px;color:#000;font-weight:normal;letter-spacing:0.5px;">&lt;symbolic access&gt;</div>
<div class="t" style="left:894px;top:499.04px;font-size:11px;color:#000;font-weight:normal;letter-spacing:0.5px;">5</div>
<div class="t" style="left:974px;top:499.04px;font-size:11px;color:#000;font-weight:normal;letter-spacing:0.5px;">Cyclic continuous</div>
<div class="t" style="left:1084px;top:499.04px;font-size:11px;color:#8a8a8a;font-weight:normal;letter-spacing:0.5px;">&lt;Undefined&gt;</div>
<div class="t" style="left:22px;top:518.04px;font-size:11px;color:#8a8a8a;font-weight:normal;letter-spacing:0.5px;">&lt;Undefined&gt;</div>
<div class="t" style="left:152px;top:518.04px;font-size:11px;color:#000;font-weight:normal;letter-spacing:0.5px;">Date/time PLC</div>
<div class="t" style="left:282px;top:518.04px;font-size:11px;color:#8a8a8a;font-weight:normal;letter-spacing:0.5px;">&lt;Undefined&gt;</div>
<div class="t" style="left:544px;top:518.04px;font-size:11px;color:#000;font-weight:normal;letter-spacing:0.5px;">&lt;symbolic access&gt;</div>
<div class="t" style="left:894px;top:518.04px;font-size:11px;color:#000;font-weight:normal;letter-spacing:0.5px;">6</div>
<div class="t" style="left:974px;top:518.04px;font-size:11px;color:#000;font-weight:normal;letter-spacing:0.5px;">Cyclic continuous</div>
<div class="t" style="left:1084px;top:518.04px;font-size:11px;color:#8a8a8a;font-weight:normal;letter-spacing:0.5px;">&lt;Undefined&gt;</div>
<div style="left:5px;top:493px;width:1191px;height:15px;border:5px solid #ed1c24"></div>
</body></html>
